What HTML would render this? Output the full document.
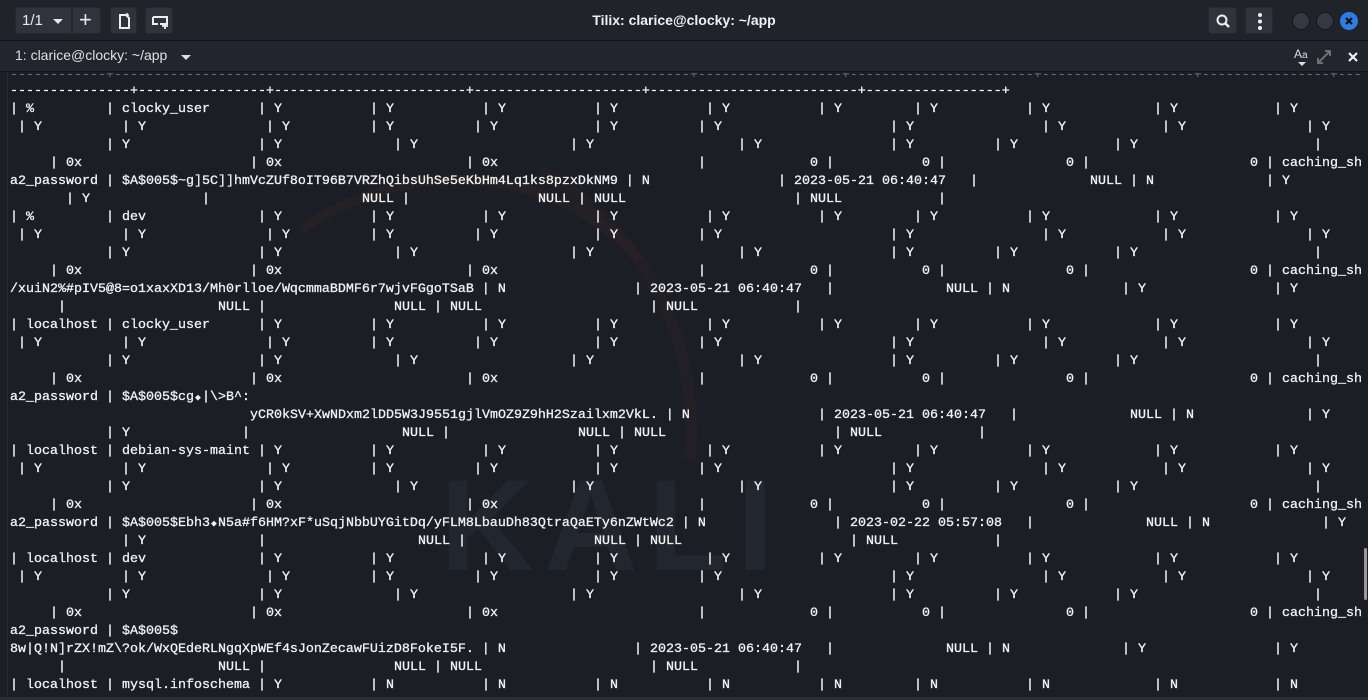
<!DOCTYPE html>
<html><head><meta charset="utf-8">
<style>
*{margin:0;padding:0;box-sizing:border-box}
html,body{width:1368px;height:700px;overflow:hidden;background:#1b1e25;font-family:"Liberation Sans",sans-serif}
#title{position:absolute;left:0;top:0;width:1368px;height:41px;background:#202329;border-bottom:1px solid #111317}
#tabbar{position:absolute;left:0;top:41px;width:1368px;height:31px;background:#22252d;border-bottom:1px solid #14161a}
.btn{position:absolute;top:7px;height:27px;background:#30333b;border-radius:3px;color:#e8e8e8;border:1px solid #26282e}
.ttl{position:absolute;left:0;width:1368px;top:12px;text-align:center;color:#f0f0f0;font-weight:bold;font-size:14px}
.circ{position:absolute;top:12px;width:18px;height:18px;border-radius:50%;background:#353944;border:1px solid #15171b}
#term{position:absolute;left:0;top:73px;width:1368px;height:627px;overflow:hidden}
#in{position:absolute;left:0;top:2px;width:1368px;height:640px}
.l{position:absolute;left:0;padding-left:10px;height:18px;width:1368px;font-family:"Liberation Mono","DejaVu Sans Mono",monospace;font-size:13.33px;line-height:18px;color:#f2f2f2;white-space:pre;-webkit-text-stroke:0.3px #f2f2f2}
.l s{text-decoration:none;position:absolute;top:0}
.d{display:inline-block;width:8px;font-family:"DejaVu Sans Mono",monospace;font-size:9px;text-align:center}
</style></head><body>
<svg style="position:absolute;left:0;top:0" width="1368" height="700">
<path d="M170 40 C260 10 330 20 380 60" stroke="#2a2c33" stroke-width="6" fill="none"/>
<path d="M300 230 C420 150 560 170 640 260" stroke="#2b2225" stroke-width="10" fill="none" opacity="0.6"/>
<path d="M540 170 C640 230 700 330 690 460" stroke="#2a2226" stroke-width="12" fill="none" opacity="0.5"/>
<text x="440" y="570" font-family="Liberation Sans" font-size="130" font-weight="bold" fill="#22262e" letter-spacing="10">KALI</text>
</svg>
<div id="title">
 <div class="btn" style="left:15px;width:57px;border-radius:3px 0 0 3px"><span style="position:absolute;left:6px;top:4px;font-size:15px">1/1</span><span style="position:absolute;left:37px;top:11px;border-left:5px solid transparent;border-right:5px solid transparent;border-top:5px solid #e8e8e8"></span></div>
 <div class="btn" style="left:72px;width:29px;border-radius:0 3px 3px 0"><span style="position:absolute;left:6px;top:0px;font-size:22px;line-height:24px">+</span></div>
 <div class="btn" style="left:110px;width:27px"><svg width="27" height="27" style="position:absolute;left:0;top:0"><path d="M9 7h6l3 3v10H9z" fill="none" stroke="#eee" stroke-width="2"/><path d="M16 9v-4M14 7h4" stroke="#eee" stroke-width="1.5"/></svg></div>
 <div class="btn" style="left:145px;width:28px"><svg width="28" height="27" style="position:absolute;left:0;top:0"><path d="M7 9h14v7H14M7 9v7h5" fill="none" stroke="#eee" stroke-width="2"/><path d="M16 18h6M19 15v6" stroke="#eee" stroke-width="1.8"/></svg></div>
 <div class="ttl">Tilix: clarice@clocky: ~/app</div>
 <div class="btn" style="left:1208px;width:29px"><svg width="29" height="27" style="position:absolute;left:0;top:0"><circle cx="13" cy="12" r="4.5" fill="none" stroke="#eee" stroke-width="2"/><path d="M16 15l4 4" stroke="#eee" stroke-width="2.5"/></svg></div>
 <div class="btn" style="left:1245px;width:28px"><svg width="28" height="27" style="position:absolute;left:0;top:0"><circle cx="14" cy="7" r="2" fill="#eee"/><circle cx="14" cy="13.5" r="2" fill="#eee"/><circle cx="14" cy="20" r="2" fill="#eee"/></svg></div>
 <div class="circ" style="left:1292px"></div>
 <div class="circ" style="left:1316px"></div>
 <div class="circ" style="left:1340px;background:#2e7de0;border-color:#2e7de0"><svg width="18" height="18" style="position:absolute;left:-1px;top:-1px"><path d="M6 6l6 6M12 6l-6 6" stroke="#111" stroke-width="2.2"/></svg></div>
</div>
<div id="tabbar">
 <span style="position:absolute;left:15px;top:6px;color:#e0e0e0;font-size:14px">1: clarice@clocky: ~/app</span>
 <span style="position:absolute;left:181px;top:14px;border-left:5px solid transparent;border-right:5px solid transparent;border-top:5px solid #ddd"></span>
 <span style="position:absolute;left:1294px;top:6px;color:#ddd;font-size:12px">A<span style="font-size:10px">a</span></span>
 <span style="position:absolute;left:1298px;top:21px;border-left:4px solid transparent;border-right:4px solid transparent;border-top:4px solid #ddd"></span>
 <svg width="16" height="16" style="position:absolute;left:1316px;top:8px"><path d="M2 14L14 2M9 2h5v5M2 9v5h5" stroke="#777" stroke-width="1.8" fill="none"/></svg>
 <svg width="12" height="12" style="position:absolute;left:1347px;top:10px"><path d="M2 2l8 8M10 2l-8 8" stroke="#eee" stroke-width="2.2"/></svg>
</div>
<div style="position:absolute;left:7px;top:73px;width:1px;height:627px;background:#2a2d34"></div>
<div style="position:absolute;left:1364px;top:548px;width:3px;height:52px;background:#9a9a9a;border-radius:2px"></div>
<div id="term"><div id="in">
<div class="l" style="top:-8px;color:#6e7178;-webkit-text-stroke:0">------------+------------------------------------------------------------------------+------------------+-----------------------+-------------------+----------------+---</div>
<div class="l" style="top:8px">---------------+----------------+------------------------+---------------------+--------------------------+-----------------+</div>

<div class="l" style="top:26px">| %         | clocky_user<s style="left:258px">| Y</s><s style="left:370px">| Y</s><s style="left:482px">| Y</s><s style="left:594px">| Y</s><s style="left:706px">| Y</s><s style="left:818px">| Y</s><s style="left:914px">| Y</s><s style="left:1026px">| Y</s><s style="left:1154px">| Y</s><s style="left:1274px">| Y</s></div>
<div class="l" style="top:44px"><s style="left:18px">| Y</s><s style="left:122px">| Y</s><s style="left:266px">| Y</s><s style="left:370px">| Y</s><s style="left:474px">| Y</s><s style="left:594px">| Y</s><s style="left:698px">| Y</s><s style="left:890px">| Y</s><s style="left:1042px">| Y</s><s style="left:1162px">| Y</s><s style="left:1306px">| Y</s></div>
<div class="l" style="top:62px"><s style="left:106px">| Y</s><s style="left:258px">| Y</s><s style="left:394px">| Y</s><s style="left:570px">| Y</s><s style="left:738px">| Y</s><s style="left:890px">| Y</s><s style="left:994px">| Y</s><s style="left:1114px">| Y</s><s style="left:1314px">|</s></div>
<div class="l" style="top:80px"><s style="left:50px">| 0x</s><s style="left:250px">| 0x</s><s style="left:466px">| 0x</s><s style="left:698px">|</s><s style="left:810px">0 |</s><s style="left:922px">0 |</s><s style="left:1066px">0 |</s><s style="left:1250px">0 | caching_sh</s></div>
<div class="l" style="top:98px">a2_password | $A$005$~g]5C]]hmVcZUf8oIT96B7VRZhQibsUhSe5eKbHm4Lq1ks8pzxDkNM9 | N<s style="left:778px">| 2023-05-21 06:40:47</s><s style="left:970px">|</s><s style="left:1090px">NULL | N</s><s style="left:1266px">| Y</s></div>
<div class="l" style="top:116px"><s style="left:66px">| Y</s><s style="left:202px">|</s><s style="left:362px">NULL |</s><s style="left:538px">NULL | NULL</s><s style="left:794px">| NULL</s><s style="left:938px">|</s></div>

<div class="l" style="top:134px">| %         | dev<s style="left:258px">| Y</s><s style="left:370px">| Y</s><s style="left:482px">| Y</s><s style="left:594px">| Y</s><s style="left:706px">| Y</s><s style="left:818px">| Y</s><s style="left:914px">| Y</s><s style="left:1026px">| Y</s><s style="left:1154px">| Y</s><s style="left:1274px">| Y</s></div>
<div class="l" style="top:152px"><s style="left:18px">| Y</s><s style="left:122px">| Y</s><s style="left:266px">| Y</s><s style="left:370px">| Y</s><s style="left:474px">| Y</s><s style="left:594px">| Y</s><s style="left:698px">| Y</s><s style="left:890px">| Y</s><s style="left:1042px">| Y</s><s style="left:1162px">| Y</s><s style="left:1306px">| Y</s></div>
<div class="l" style="top:170px"><s style="left:106px">| Y</s><s style="left:258px">| Y</s><s style="left:394px">| Y</s><s style="left:570px">| Y</s><s style="left:738px">| Y</s><s style="left:890px">| Y</s><s style="left:994px">| Y</s><s style="left:1114px">| Y</s><s style="left:1314px">|</s></div>
<div class="l" style="top:188px"><s style="left:50px">| 0x</s><s style="left:250px">| 0x</s><s style="left:466px">| 0x</s><s style="left:698px">|</s><s style="left:810px">0 |</s><s style="left:922px">0 |</s><s style="left:1066px">0 |</s><s style="left:1250px">0 | caching_sh</s></div>
<div class="l" style="top:206px">/xuiN2%#pIV5@8=o1xaxXD13/Mh0rlloe/WqcmmaBDMF6r7wjvFGgoTSaB | N<s style="left:634px">| 2023-05-21 06:40:47</s><s style="left:826px">|</s><s style="left:946px">NULL | N</s><s style="left:1122px">| Y</s><s style="left:1274px">| Y</s></div>
<div class="l" style="top:224px"><s style="left:58px">|</s><s style="left:218px">NULL |</s><s style="left:394px">NULL | NULL</s><s style="left:650px">| NULL</s><s style="left:794px">|</s></div>

<div class="l" style="top:242px">| localhost | clocky_user<s style="left:258px">| Y</s><s style="left:370px">| Y</s><s style="left:482px">| Y</s><s style="left:594px">| Y</s><s style="left:706px">| Y</s><s style="left:818px">| Y</s><s style="left:914px">| Y</s><s style="left:1026px">| Y</s><s style="left:1154px">| Y</s><s style="left:1274px">| Y</s></div>
<div class="l" style="top:260px"><s style="left:18px">| Y</s><s style="left:122px">| Y</s><s style="left:266px">| Y</s><s style="left:370px">| Y</s><s style="left:474px">| Y</s><s style="left:594px">| Y</s><s style="left:698px">| Y</s><s style="left:890px">| Y</s><s style="left:1042px">| Y</s><s style="left:1162px">| Y</s><s style="left:1306px">| Y</s></div>
<div class="l" style="top:278px"><s style="left:106px">| Y</s><s style="left:258px">| Y</s><s style="left:394px">| Y</s><s style="left:570px">| Y</s><s style="left:738px">| Y</s><s style="left:890px">| Y</s><s style="left:994px">| Y</s><s style="left:1114px">| Y</s><s style="left:1314px">|</s></div>
<div class="l" style="top:296px"><s style="left:50px">| 0x</s><s style="left:250px">| 0x</s><s style="left:466px">| 0x</s><s style="left:698px">|</s><s style="left:810px">0 |</s><s style="left:922px">0 |</s><s style="left:1066px">0 |</s><s style="left:1250px">0 | caching_sh</s></div>
<div class="l" style="top:314px">a2_password | $A$005$cg<span class="d">◆</span>|\&gt;B^:</div>
<div class="l" style="top:332px"><s style="left:250px">yCR0kSV+XwNDxm2lDD5W3J9551gjlVmOZ9Z9hH2Szailxm2VkL. | N</s><s style="left:818px">| 2023-05-21 06:40:47</s><s style="left:1010px">|</s><s style="left:1130px">NULL | N</s><s style="left:1306px">| Y</s></div>
<div class="l" style="top:350px"><s style="left:106px">| Y</s><s style="left:242px">|</s><s style="left:402px">NULL |</s><s style="left:578px">NULL | NULL</s><s style="left:834px">| NULL</s><s style="left:978px">|</s></div>

<div class="l" style="top:368px">| localhost | debian-sys-maint<s style="left:258px">| Y</s><s style="left:370px">| Y</s><s style="left:482px">| Y</s><s style="left:594px">| Y</s><s style="left:706px">| Y</s><s style="left:818px">| Y</s><s style="left:914px">| Y</s><s style="left:1026px">| Y</s><s style="left:1154px">| Y</s><s style="left:1274px">| Y</s></div>
<div class="l" style="top:386px"><s style="left:18px">| Y</s><s style="left:122px">| Y</s><s style="left:266px">| Y</s><s style="left:370px">| Y</s><s style="left:474px">| Y</s><s style="left:594px">| Y</s><s style="left:698px">| Y</s><s style="left:890px">| Y</s><s style="left:1042px">| Y</s><s style="left:1162px">| Y</s><s style="left:1306px">| Y</s></div>
<div class="l" style="top:404px"><s style="left:106px">| Y</s><s style="left:258px">| Y</s><s style="left:394px">| Y</s><s style="left:570px">| Y</s><s style="left:738px">| Y</s><s style="left:890px">| Y</s><s style="left:994px">| Y</s><s style="left:1114px">| Y</s><s style="left:1314px">|</s></div>
<div class="l" style="top:422px"><s style="left:50px">| 0x</s><s style="left:250px">| 0x</s><s style="left:466px">| 0x</s><s style="left:698px">|</s><s style="left:810px">0 |</s><s style="left:922px">0 |</s><s style="left:1066px">0 |</s><s style="left:1250px">0 | caching_sh</s></div>
<div class="l" style="top:440px">a2_password | $A$005$Ebh3<span class="d">◆</span>N5a#f6HM?xF*uSqjNbbUYGitDq/yFLM8LbauDh83QtraQaETy6nZWtWc2 | N<s style="left:834px">| 2023-02-22 05:57:08</s><s style="left:1026px">|</s><s style="left:1146px">NULL | N</s><s style="left:1322px">| Y</s></div>
<div class="l" style="top:458px"><s style="left:122px">| Y</s><s style="left:258px">|</s><s style="left:418px">NULL |</s><s style="left:594px">NULL | NULL</s><s style="left:850px">| NULL</s><s style="left:994px">|</s></div>

<div class="l" style="top:476px">| localhost | dev<s style="left:258px">| Y</s><s style="left:370px">| Y</s><s style="left:482px">| Y</s><s style="left:594px">| Y</s><s style="left:706px">| Y</s><s style="left:818px">| Y</s><s style="left:914px">| Y</s><s style="left:1026px">| Y</s><s style="left:1154px">| Y</s><s style="left:1274px">| Y</s></div>
<div class="l" style="top:494px"><s style="left:18px">| Y</s><s style="left:122px">| Y</s><s style="left:266px">| Y</s><s style="left:370px">| Y</s><s style="left:474px">| Y</s><s style="left:594px">| Y</s><s style="left:698px">| Y</s><s style="left:890px">| Y</s><s style="left:1042px">| Y</s><s style="left:1162px">| Y</s><s style="left:1306px">| Y</s></div>
<div class="l" style="top:512px"><s style="left:106px">| Y</s><s style="left:258px">| Y</s><s style="left:394px">| Y</s><s style="left:570px">| Y</s><s style="left:738px">| Y</s><s style="left:890px">| Y</s><s style="left:994px">| Y</s><s style="left:1114px">| Y</s><s style="left:1314px">|</s></div>
<div class="l" style="top:530px"><s style="left:50px">| 0x</s><s style="left:250px">| 0x</s><s style="left:466px">| 0x</s><s style="left:698px">|</s><s style="left:810px">0 |</s><s style="left:922px">0 |</s><s style="left:1066px">0 |</s><s style="left:1250px">0 | caching_sh</s></div>
<div class="l" style="top:548px">a2_password | $A$005$</div>
<div class="l" style="top:566px">8w|Q!N]rZX!mZ\?ok/WxQEdeRLNgqXpWEf4sJonZecawFUizD8FokeI5F. | N<s style="left:634px">| 2023-05-21 06:40:47</s><s style="left:826px">|</s><s style="left:946px">NULL | N</s><s style="left:1122px">| Y</s><s style="left:1274px">| Y</s></div>
<div class="l" style="top:584px"><s style="left:58px">|</s><s style="left:218px">NULL |</s><s style="left:394px">NULL | NULL</s><s style="left:650px">| NULL</s><s style="left:794px">|</s></div>

<div class="l" style="top:602px">| localhost | mysql.infoschema<s style="left:258px">| Y</s><s style="left:370px">| N</s><s style="left:482px">| N</s><s style="left:594px">| N</s><s style="left:706px">| N</s><s style="left:818px">| N</s><s style="left:914px">| N</s><s style="left:1026px">| N</s><s style="left:1154px">| N</s><s style="left:1274px">| N</s></div>
</div></div>
<div style="position:absolute;left:0;top:697px;width:1368px;height:3px;background:#2a2d34"></div>
</body></html>
